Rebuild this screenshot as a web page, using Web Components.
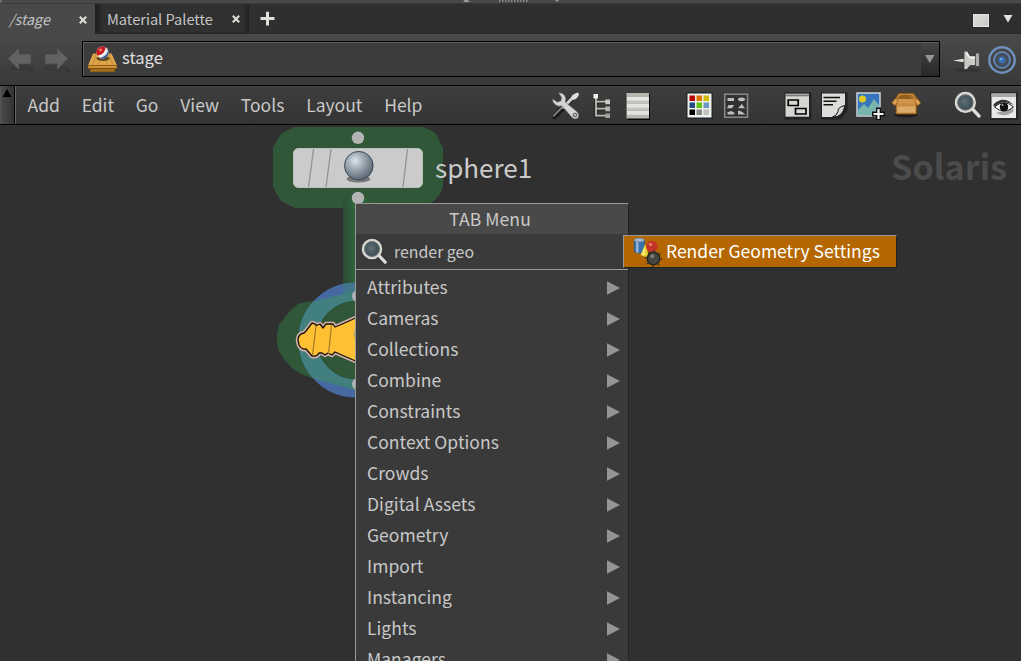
<!DOCTYPE html>
<html lang="en">
<head>
<meta charset="utf-8">
<title>Solaris network editor</title>
<style>
html,body{margin:0;height:100%;overflow:hidden;background:#303030}
body{font-family:"Noto Sans CJK SC","Noto Sans",sans-serif;color:#c8c8c8}
</style>
</head>
<body>
<network-pane></network-pane>
<script>
const define = (name, html, setup) => customElements.define(name, class extends HTMLElement {
  connectedCallback() {
    if (this.shadowRoot) return;
    const t = document.createElement('template');
    t.innerHTML = typeof html === 'function' ? html(this) : html;
    this.attachShadow({mode: 'open'}).append(t.content.cloneNode(true));
    if (setup) setup(this);
  }
});

const magnifier = `
  <defs><radialGradient id="lens" cx=".45" cy=".45"><stop offset="0" stop-color="#5d7078"/><stop offset="1" stop-color="#38474f"/></radialGradient></defs>
  <path d="M18.5 18.5L26.5 26.5" stroke="#222" stroke-width="5.5" opacity=".5"/>
  <path d="M18.5 18L26 26" stroke="#dcdcd8" stroke-width="3.4" stroke-linecap="round"/>
  <circle cx="12.4" cy="12.4" r="9.3" fill="url(#lens)" stroke="#d6d6d2" stroke-width="2.6"/>
  <circle cx="12.4" cy="12.4" r="7.6" fill="none" stroke="#777" stroke-width=".8"/>`;

const icons = {
  tools: `<path d="M5 26.500L26 5" stroke="#111" stroke-width="4" opacity=".5"/>
    <path d="M4.500 27L14.500 17" stroke="#1a1a1a" stroke-width="4.400" stroke-linecap="round"/>
    <path d="M3.600 26L13.600 16" stroke="#8c9090" stroke-width="1.600" stroke-linecap="round"/>
    <path d="M12.500 18L23.500 7" stroke="#d5d7d4" stroke-width="2.800"/>
    <path d="M21 7.500Q23 3.500 28 2.600L29 4Q28 8.500 23.500 10Z" fill="#dededb"/>
    <path d="M8.500 2.800Q14 3 15.500 7.500Q16 10 15.200 12L27 21.800Q30 25 27.800 28Q24.800 30.200 22 27.500L12 15.800Q8.500 17 5 14.600Q2.300 12.400 2.600 9L7.500 12.200L11 10.800L11.500 7.200Z" fill="#d3d5d2" stroke="#6a6c6a" stroke-width=".6"/>
    <circle cx="25" cy="25" r="1.800" fill="#bbb" stroke="#555"/>`,
  tree: `<path d="M9.500 8V26.500H21M9.500 12H21M9.500 19H21" fill="none" stroke="#222" stroke-width="4" opacity=".5"/>
    <path d="M10 8V25.700H21M10 11.700H21M10 18.700H21" fill="none" stroke="#b9bab0" stroke-width="1.800"/>
    <path d="M7.500 4h4.500v4.500H7.500z" fill="#f0f0ee"/><path d="M19.300 9.500h4.700v4.700h-4.700z" fill="#ccccc6"/><path d="M19.300 16.500h4.700v4.700h-4.700z" fill="#b5b7b2"/><path d="M19.300 23.500h4.700v4.500h-4.700z" fill="#a2a49f"/>`,
  list: `<path d="M4.500 4H27V30H4.500z" fill="#0a0a0a"/><path d="M3.500 3H26V28.500H3.500z" fill="#b5b7b1"/>
    <path d="M4 7h22v3.700H4zM4 14h22v3.700H4zM4 21h22v3.700H4z" fill="#e4e4e1"/><path d="M4 11.500h22v2H4zM4 18.300h22v2H4z" fill="#c4c6bf"/>`,
  palette: `<path d="M2 2h27v27H2z" fill="#20292c"/><path d="M3.500 3.500h24v24h-24z" fill="#f0f0ed"/>
    <path d="M5.500 5.500h5.500v5.500h-5.500z" fill="#b90000"/><path d="M12.500 5.500h5.500v5.500h-5.500z" fill="#de7000"/><path d="M19.500 5.500h5.500v5.500h-5.500z" fill="#d1bd00"/>
    <path d="M5.500 12.500h5.500v5.500h-5.500z" fill="#254a85"/><path d="M12.500 12.500h5.500v5.500h-5.500z" fill="#63c40d"/><path d="M19.500 12.500h5.500v5.500h-5.500z" fill="#6d96c2"/>
    <path d="M5.500 19.500h5.500v5.500h-5.500z" fill="#000"/><path d="M12.500 19.500h5.500v5.500h-5.500z" fill="#888a86"/><path d="M19.500 19.500h5.500v5.500h-5.500z" fill="#c0c3bb"/>`,
  shapes: `<path d="M3.700 4.200h22.800v23H3.700z" fill="#303232" stroke="#888985" stroke-width="1.600"/>
    <path d="M6.500 8h6.500v3H6.500zM7.500 15h5.500l-2 3.300H6zM6.500 24.500v-2.200l3.500-1.300 3.300 1.500v2zM17 24.500v-4l3.500 1 4 3z" fill="#bdbfba"/><ellipse cx="20.500" cy="9.300" rx="3.500" ry="1.900" fill="#bdbfba"/><path d="M17 18.200h7L20.700 14z" fill="#bdbfba"/>`,
  netbox: `<path d="M2.500 2.500h27v27h-27z" fill="#202425"/><path d="M3.500 3.700h23.500v23H3.500z" fill="#d5d6d2"/><path d="M3.500 4.500h23.500v1.800H3.500z" fill="#777a77"/>
    <path d="M6.200 10h10v5.500H6.200zM13.500 18.500h10.500v5.500H13.500z" fill="#d6d7d3" stroke="#000" stroke-width="1.700"/>`,
  note: `<path d="M3 2.500h26.500v18l-7 9H3z" fill="#202425"/><path d="M4 3.500h23v14l-9 9.500H4z" fill="#ddddda"/><path d="M27 15.500Q19.500 17 20 21.500Q18.500 26 14.500 27Q24.500 28 27 15.500z" fill="#d1d2ce" stroke="#111" stroke-width="1"/>
    <path d="M5.500 7.500h16.500M5.500 11.200h13M5.500 14.800h9.500" stroke="#111" stroke-width="1.600"/>`,
  image: `<path d="M2 3h23v23H2z" fill="#3475bd" stroke="#cfd2d2" stroke-width="1.500"/><circle cx="7.500" cy="9" r="3.500" fill="#e0cb20"/>
    <path d="M2.800 25V20L9 14l4 4 6-9 5.300 6.500V25z" fill="#79b3ae"/><path d="M17 24h13M23.500 17.500v13" stroke="#111" stroke-width="5"/><path d="M18.500 24h10M23.500 19v10" stroke="#f2f2f2" stroke-width="2.200"/>`,
  crate: `<ellipse cx="15" cy="25" rx="12" ry="2.500" fill="#151515" opacity=".7"/>
    <path d="M8 3.300h14.500l4 6H4z" fill="#c58a3c" stroke="#7b4a0a" stroke-width=".8"/><path d="M9.500 5h9.500l2 4H6z" fill="#8f5f1f"/><path d="M19 5h2.500l3 4H21z" fill="#a8712a"/>
    <path d="M5 11h20.500v13H5z" fill="#c98b42" stroke="#7b4c10" stroke-width=".8"/><path d="M6.500 16.500h17.500v6H6.500z" fill="#dcaa68"/>
    <path d="M4 9h22.500l-1 4.500H5z" fill="#d2934a"/><path d="M4.300 8.500L.8 12.800l3 3L7 11zM26.200 8.500l3.600 4.300-3 3L23.500 11z" fill="#dda055" stroke="#875310" stroke-width=".7"/>`,
  magnifier: magnifier,
  eye: `<path d="M1 2h28v28H1z" fill="#242828"/><path d="M2.500 3.500h24.500v24.500H2.500z" fill="#e9e9e7"/><path d="M2.500 3.500h24.500v3.500H2.500z" fill="#a6a7a2"/>
    <path d="M7 23Q17 28 24.500 21.500L24 18z" fill="#a4a5a0"/><path d="M5.500 17Q15 8.500 24.500 17Q15 25 5.500 17z" fill="#fff" stroke="#262626" stroke-width="1"/><path d="M4.500 14.500Q14.500 5 24.500 15Q14 8.500 5 17z" fill="#2b3032"/><circle cx="15" cy="17" r="4.300" fill="#111"/><circle cx="13.500" cy="15" r="1" fill="#aaa"/>`,
  back: `<ellipse cx="17" cy="24" rx="12" ry="3" fill="#303030" opacity=".35"/><path d="M3 14.500L14 4v6h12v10H14v6z" fill="#626262" stroke="#484848" stroke-width=".7"/><path d="M24 23l5 3-5 3z" fill="#363636"/>`,
  forward: `<ellipse cx="14" cy="24" rx="12" ry="3" fill="#303030" opacity=".35"/><path d="M27 14.500L16 4v6H4v10h12v6z" fill="#626262" stroke="#484848" stroke-width=".7"/><path d="M24.500 23l5 3-5 3z" fill="#363636"/>`,
  stage: `<path d="M6 9.500h18.500l5.500 12H1z" fill="#e0a54a"/><path d="M9 10L6 21M13 10l-1.500 11M18.500 10l1.500 11M22 10l4 11" stroke="#b67e2a" stroke-width=".7"/><path d="M1 21.500h29v3H1z" fill="#d3922f" stroke="#764a10" stroke-width=".6"/><path d="M3 24.500h25v3.500H3z" fill="#a36c1d" stroke="#604008" stroke-width=".5"/>
    <ellipse cx="16" cy="14.500" rx="6.500" ry="2.500" fill="#5f4a22"/><circle cx="15.500" cy="8.500" r="6" fill="#ececec"/><path d="M21 6.500Q22.500 11 18.800 13.500Q16 15 13.300 14.100Q20 12 21 6.500z" fill="#285a9c"/><path d="M18.500 3.400Q18.500 9.500 10.500 11.800Q8.500 8.500 10.500 5Q14 1 18.500 3.400z" fill="#c9191f"/><circle cx="13.500" cy="6" r="1.400" fill="#ee817b"/>`,
  pin: `<ellipse cx="16" cy="25" rx="13" ry="2.300" fill="#303030" opacity=".7"/><path d="M1 15.500L12 13.700v3.600z" fill="#e5e6e3"/><path d="M12 6h3l3 5h6V20.500h-6l-3 4h-3z" fill="#c9cac6" stroke="#333" stroke-width=".7"/><path d="M14 9.500l4 4h6v-2h-6l-3-5z" fill="#f2f2f0"/><path d="M23.500 8h4v13.500h-4z" fill="#acada9" stroke="#333" stroke-width=".7"/>`,
  target: `<circle cx="15" cy="15" r="12.700" fill="none" stroke="#6e8fbb" stroke-width="2.500"/><circle cx="15" cy="15" r="8" fill="#3f4b5a" stroke="#6384b2" stroke-width="2"/><circle cx="15" cy="15" r="5.800" fill="#48505c"/><circle cx="15" cy="15" r="3.300" fill="#3972bd"/><circle cx="14" cy="14" r="1.200" fill="#79a4d6"/>`,
  geometry: `<path d="M1.200 3v11.500q5 3.500 10.300 0V3z" fill="#3a70ab" stroke="#28517f" stroke-width=".6"/><path d="M3 4v11.300l2.500 .8V4z" fill="#8fb4d4"/><ellipse cx="6.300" cy="3" rx="5.100" ry="2" fill="#a3b8ca" stroke="#4a6c90" stroke-width=".5"/><path d="M12.300 7L7.500 18q3.500 2.500 8.500 1.500z" fill="#e8d433"/><path d="M12 9.500L9 17.500l2.500 1z" fill="#fff48a"/><circle cx="19" cy="9.500" r="5.700" fill="#c43227"/><circle cx="17.500" cy="7.500" r="1.800" fill="#dd7668"/>
    <circle cx="20.500" cy="21.500" r="7.800" fill="none" stroke="#3a3936" stroke-width="1.700" stroke-dasharray="1.500 4.600"/><circle cx="20.500" cy="21.500" r="6.300" fill="#444643" stroke="#22221f" stroke-width="1.300"/><circle cx="19.300" cy="19.300" r="2" fill="#7d7f7b"/>`
};

define('ui-icon', el => `<style>:host{display:block;flex:none;width:30px;height:30px}svg{display:block;width:100%;height:100%}</style>
  <svg viewBox="0 0 30 30" fill="none">${icons[el.getAttribute('name')]}</svg>`);

define('pane-tab', `<style>
  :host{display:flex;align-items:center;justify-content:space-between;box-sizing:border-box;height:29px;width:153px;padding:0 9px 0 11px;color:#c4c4c4;font-size:14.600px;background:linear-gradient(90deg,#202020,#303030 7px,#303030 147px,#222);border-bottom:1px solid #292929}
  :host([active]){width:96px;height:30px;padding-left:9px;padding-right:8px;background:#494949;font-style:italic;font-size:14.300px;border-bottom:0;border-right:1px solid #202020}
  span{line-height:28px;white-space:pre;padding-top:2px}
  :host([active]) span{padding-top:0}
  svg{width:8px;height:8px;flex:none;margin-top:2px}</style>
  <span><slot></slot></span><svg viewBox="0 0 8 8"><path d="M.8 .8L7.200 7.200M7.200 .8L.8 7.200" stroke="#deded9" stroke-width="2.100"/></svg>`);

define('tab-strip', `<style>
  :host{display:block;background:#494949}
  .grip{height:4px;display:flex;justify-content:flex-start;border-bottom:1px solid #393939;box-sizing:border-box}
  .grip svg{display:block;width:1021px;height:3px}
  .row{display:flex;height:30px;background:#2f2f2f;box-shadow:inset 0 -1px #292929}
  .plus{width:18px;height:18px;margin:6px 0 0 9px}
  .right{margin-left:auto;display:flex;align-items:center;gap:14px;padding-right:8px}
  .pane{width:16px;height:13px;box-sizing:border-box;background:linear-gradient(135deg,#ddddda,#c8c9c6);border:1px solid #e6e6e4;box-shadow:0 0 0 1px #252b2d;margin-top:2px}
  </style>
  <div class="grip"><svg viewBox="0 0 1021 3"><path d="M463 2L464.500 0H468L470 2zM555 0h4l-2 2z" fill="#999"/><path d="M499 1h30" stroke="#999" stroke-width="1.500" stroke-dasharray="1.500 1.500"/><path d="M1 0v3" stroke="#888"/></svg></div>
  <div class="row"><pane-tab active>/stage</pane-tab><pane-tab>Material Palette</pane-tab>
  <svg class="plus" viewBox="0 0 18 18"><path d="M9.500 1.800v13.600M2.500 8.600h14" stroke="#dfe0dc" stroke-width="3"/></svg>
  <div class="right"><div class="pane"></div><svg width="10" height="8" viewBox="0 0 10 8"><path d="M.5 0h9L5 7.500z" fill="#e2e2df"/></svg></div></div>`);

define('path-bar', `<style>
  :host{display:flex;align-items:flex-start;height:52px;box-sizing:border-box;padding:7px 4px 0 5px;background:linear-gradient(#4a4a4a,#393939);border-bottom:1px solid #000}
  .nav{display:flex;gap:6px;margin-right:11px;padding-top:3px}
  .nav,.end{flex:none}
  .field{flex:1;display:flex;align-items:center;height:36px;box-sizing:border-box;border:1px solid #000;background:#3c3c3c;box-shadow:inset 1px 1px #606060;padding-left:4px;color:#e0e0e0;font-size:16.600px;margin-right:12px}
  .field span{margin-left:5px;line-height:30px;margin-top:-4px}
  .drop{margin-left:auto;width:18px;height:33px;background:linear-gradient(#454545,#282828);display:flex;align-items:center;justify-content:center}
  .end{display:flex;gap:5px;padding-top:4px}</style>
  <div class="nav"><ui-icon name="back"></ui-icon><ui-icon name="forward"></ui-icon></div>
  <div class="field"><ui-icon name="stage"></ui-icon><span>stage</span><div class="drop"><svg width="10" height="9" viewBox="0 0 10 9"><path d="M0 0h9.500L4.800 8z" fill="#969696"/></svg></div></div>
  <div class="end"><ui-icon name="pin"></ui-icon><ui-icon name="target"></ui-icon></div>`);

define('menu-bar', `<style>
  :host{display:flex;align-items:stretch;height:39px;box-sizing:border-box;background:linear-gradient(#3e3e3e,#343434);border-bottom:1px solid #000;box-shadow:inset 0 1px #484848}
  .stow{width:16px;box-sizing:border-box;border-left:1px solid #555;border-right:1px solid #666;background:linear-gradient(90deg,#4b4b4b,#323232 13px,#000 13px);margin-right:11.500px}
  .stow svg{display:block;margin:3px 0 0 1px}
  nav{display:flex;gap:21.800px;font-size:17.500px;line-height:38px}
  .tools{margin-left:auto;display:flex;align-items:center;padding-right:2px;gap:6.400px}
  .brk{margin-left:25px}</style>
  <div class="stow"><svg width="10" height="8" viewBox="0 0 10 8"><path d="M5 0l4.500 8H.5z" fill="#000"/></svg></div>
  <nav><span>Add</span><span>Edit</span><span>Go</span><span>View</span><span>Tools</span><span>Layout</span><span>Help</span></nav>
  <div class="tools"><ui-icon name="tools"></ui-icon><ui-icon name="tree"></ui-icon><ui-icon name="list"></ui-icon>
  <ui-icon class="brk" name="palette"></ui-icon><ui-icon name="shapes"></ui-icon>
  <ui-icon class="brk" name="netbox"></ui-icon><ui-icon name="note"></ui-icon><ui-icon name="image"></ui-icon><ui-icon name="crate"></ui-icon>
  <ui-icon class="brk" name="magnifier"></ui-icon><ui-icon name="eye"></ui-icon></div>`);

define('node-canvas', `<style>
  :host{display:block;position:relative;background:#303030}
  svg{position:absolute;left:0;top:0;width:1021px;height:536px}
  .name{position:absolute;left:435px;top:22px;font-size:26px;line-height:40px;color:#cbcbcb}
  .ctx{position:absolute;right:14px;top:17px;font-size:34.200px;font-weight:700;line-height:46px;color:#4b4b4b}</style>
  <svg viewBox="0 125 1021 536">
    <defs><linearGradient id="wire"><stop offset="0" stop-color="#2f4c35"/><stop offset=".5" stop-color="#2e7540"/><stop offset="1" stop-color="#2f5538"/></linearGradient>
    <radialGradient id="ball" cx=".38" cy=".33" r=".7"><stop offset="0" stop-color="#dce5eb"/><stop offset=".45" stop-color="#9aa7b1"/><stop offset="1" stop-color="#56636e"/></radialGradient>
    <clipPath id="blob"><path d="M277 334L279 325L285 317L291 310L298 304L306 302L315 301L355 291H400V390H355L312 378L301 374L292 368L284 359L279 351L277 344z"/></clipPath></defs>
    <path d="M273 148L276 142L281 134L288 130L295 127H423L430 130L436 134L440 142L443 148V187L440 194L434 201L422 208H295L287 204L281 201L277 194L273 187z" fill="#305838"/>
    <path d="M343 198h30v94h-30z" fill="url(#wire)" opacity=".85"/>
    <rect x="293" y="148" width="130" height="40" rx="6" fill="#cbcbcb"/><rect x="293.500" y="148.500" width="129" height="39" rx="5.500" fill="none" stroke="#b5c3b8"/>
    <path d="M313.500 149L308.500 187M331 149L326 187M407.500 149L403 187" stroke="#929292" stroke-width="1.300"/>
    <ellipse cx="358.500" cy="179" rx="12" ry="3.500" fill="#777"/><circle cx="358.800" cy="165.700" r="14.300" fill="url(#ball)" stroke="#3d4a59" stroke-width="1"/>
    <g fill="#b4b4b4"><circle cx="358" cy="137.800" r="6.200"/><circle cx="358" cy="198" r="6.200"/></g>
    <g clip-path="url(#blob)"><path d="M270 285h100v115H270z" fill="#305838"/></g>
    <circle cx="356" cy="340" r="48.500" fill="none" stroke="#4569a0" stroke-width="18"/>
    <circle cx="356" cy="340" r="48.500" fill="none" stroke="#428080" stroke-width="18" clip-path="url(#blob)"/>
    <path d="M343 283h13v11h-13z" fill="#3c9068" opacity=".3"/>
    <g fill="#b4b4b4"><circle cx="358" cy="296" r="6"/><circle cx="358" cy="384" r="6"/></g>
    <g stroke-linejoin="round"><path d="M298 340Q298 334 304 333L306 331L312 323Q315 323.500 316.500 325.500L320 324L323 328L326 324H333L335 327L340 325L360 316V363L335 352L332 355L328 353L325 355L322 353L319 353Q317 357 312 356L306 349Q302 350 299 345z" fill="#d9b1a7" stroke="#d9b1a7" stroke-width="4.500"/>
    <path d="M298 340Q298 334 304 333L306 331L312 323Q315 323.500 316.500 325.500L320 324L323 328L326 324H333L335 327L340 325L360 316V363L335 352L332 355L328 353L325 355L322 353L319 353Q317 357 312 356L306 349Q302 350 299 345z" fill="#ffc033" stroke="#111" stroke-width="1.300"/></g>
    <path d="M316 326L312.500 355M331.500 325L328.500 354" stroke="#a17a2b" stroke-width="1.200"/><ellipse cx="358" cy="334" rx="4" ry="5" fill="#ddd18b" stroke="#aa9d51"/>
  </svg>
  <div class="name">sphere1</div><div class="ctx">Solaris</div><slot></slot>`);

define('menu-row', `<style>
  :host{display:flex;align-items:center;justify-content:space-between;height:31px;padding:0 8px 0 11px;font-size:17.500px;line-height:31px;letter-spacing:.03px}
  svg{flex:none;margin-top:2px}</style><span><slot></slot></span><svg width="13" height="14" viewBox="0 0 13 14"><path d="M0 .3L13 7L0 13.700z" fill="#949494"/></svg>`);

define('tab-menu', `<style>
  :host{display:block;position:absolute;left:355px;top:78px;width:274px;height:470px;box-sizing:border-box;border:1px solid #999;border-right-color:#242424;background:#3a3a3a}
  .title{height:30px;background:#494949;text-align:center;font-size:17.500px;line-height:30px;letter-spacing:.1px;padding-right:4px}
  .search{height:35px;display:flex;align-items:center;padding-left:4px;border-bottom:1px solid #999;font-size:15.900px}
  .search ui-icon{width:29px;height:29px}
  .search span{margin-left:5px;line-height:33px}
  .rows{padding-top:1px}</style>
  <div class="title">TAB Menu</div>
  <div class="search"><ui-icon name="magnifier"></ui-icon><span>render geo</span></div>
  <div class="rows"></div>`, el => {
  const rows = el.shadowRoot.querySelector('.rows');
  for (const label of ['Attributes','Cameras','Collections','Combine','Constraints','Context Options','Crowds','Digital Assets','Geometry','Import','Instancing','Lights','Managers']) {
    const row = document.createElement('menu-row');
    row.textContent = label;
    rows.append(row);
  }
});

define('menu-match', `<style>
  :host{display:flex;align-items:center;position:absolute;left:623px;top:110px;width:274px;height:33px;box-sizing:border-box;padding-left:9px;background:#b46700;border:1px solid #999;border-right-color:#222;border-bottom-color:#222;color:#fff;font-size:17.500px;line-height:29px}
  span{margin-left:3px;margin-top:-2px;white-space:nowrap}</style><ui-icon name="geometry"></ui-icon><span><slot></slot></span>`);

define('network-pane', `<style>:host{display:flex;flex-direction:column;width:1021px;height:661px;overflow:hidden}node-canvas{flex:1}</style>
  <tab-strip></tab-strip><path-bar></path-bar><menu-bar></menu-bar>
  <node-canvas><tab-menu></tab-menu><menu-match>Render Geometry Settings</menu-match></node-canvas>`);
</script>
</body>
</html>
